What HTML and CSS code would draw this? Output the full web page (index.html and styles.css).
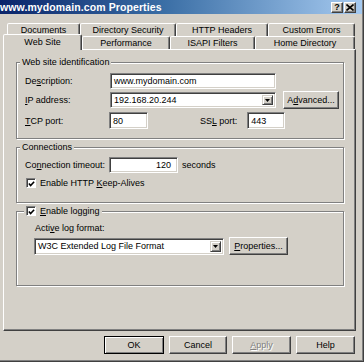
FILE: index.html
```html
<!DOCTYPE html>
<html>
<head>
<meta charset="utf-8">
<link rel="stylesheet" href="styles.css">
</head>
<body>
<div class="window">
  <div class="titlebar">
    <span class="title">www.mydomain.com Properties</span>
    <div class="tbtns">
      <span class="tbtn help">?</span>
      <span class="tbtn close"><svg width="8" height="7" viewBox="0 0 8 7"><path d="M0.5 0.5 L7.5 6.5 M7.5 0.5 L0.5 6.5" stroke="#000" stroke-width="1.6"/></svg></span>
    </div>
  </div>

  <div class="tabs">
    <div class="tabrow back">
      <span class="tab w-docs">Documents</span>
      <span class="tab w-dirsec">Directory Security</span>
      <span class="tab w-http">HTTP Headers</span>
      <span class="tab w-errors">Custom Errors</span>
    </div>
    <div class="tabrow front">
      <span class="tab sel w-web">Web Site</span>
      <span class="tab w-perf">Performance</span>
      <span class="tab w-isapi">ISAPI Filters</span>
      <span class="tab w-home">Home Directory</span>
    </div>
  </div>

  <div class="panel">
    <fieldset class="group">
      <legend>Web site identification</legend>
      <div class="gbody g1">
        <div class="row r1">
          <span class="lbl">De<u>s</u>cription:</span>
          <span class="edit w-desc">www.mydomain.com</span>
        </div>
        <div class="row r2">
          <span class="lbl"><u>I</u>P address:</span>
          <span class="edit combo w-ip">192.168.20.244<span class="dd"><svg width="5" height="3" viewBox="0 0 5 3"><path d="M0 0 H5 L2.5 3 Z" fill="#000"/></svg></span></span>
          <span class="btn w-adv">A<u>d</u>vanced...</span>
        </div>
        <div class="row r3">
          <span class="lbl"><u>T</u>CP port:</span>
          <span class="edit w-tcp">80</span>
          <span class="lbl ssl">SS<u>L</u> port:</span>
          <span class="edit w-ssl">443</span>
        </div>
      </div>
    </fieldset>

    <fieldset class="group">
      <legend>Connections</legend>
      <div class="gbody g2">
        <div class="row r1">
          <span class="lbl">Co<u>n</u>nection timeout:</span>
          <span class="edit num w-timeout">120</span>
          <span class="unit">seconds</span>
        </div>
        <div class="row chkrow">
          <span class="cb"><svg width="8" height="8" viewBox="0 0 8 8"><path d="M1 3.5 L3 5.8 L7 1.5" fill="none" stroke="#000" stroke-width="1.8"/></svg></span>
          <span>Enable HTTP <u>K</u>eep-Alives</span>
        </div>
      </div>
    </fieldset>

    <fieldset class="group">
      <legend class="chklegend">
        <span class="cb"><svg width="8" height="8" viewBox="0 0 8 8"><path d="M1 3.5 L3 5.8 L7 1.5" fill="none" stroke="#000" stroke-width="1.8"/></svg></span>
        <span><u>E</u>nable logging</span>
      </legend>
      <div class="gbody g3">
        <div class="sublbl">Acti<u>v</u>e log format:</div>
        <div class="row r-log">
          <span class="edit combo w-log">W3C Extended Log File Format<span class="dd"><svg width="5" height="3" viewBox="0 0 5 3"><path d="M0 0 H5 L2.5 3 Z" fill="#000"/></svg></span></span>
          <span class="btn w-props"><u>P</u>roperties...</span>
        </div>
      </div>
    </fieldset>
  </div>

  <div class="buttons">
    <span class="btn dlg default">OK</span>
    <span class="btn dlg w-cancel">Cancel</span>
    <span class="btn dlg disabled"><u>A</u>pply</span>
    <span class="btn dlg">Help</span>
  </div>
</div>
</body>
</html>
```

FILE: styles.css
```css
* { box-sizing: border-box; }

html, body {
  margin: 0;
  padding: 0;
  background: #d4d0c8;
}

body {
  font-family: "Liberation Sans", Arial, sans-serif;
  font-size: 9px;
  color: #000;
}

u { text-decoration: underline; text-underline-offset: 1px; }

.window {
  width: 364px;
  height: 362px;
  background: #d4d0c8;
  border-right: 1px solid #404040;
  border-bottom: 1px solid #404040;
  box-shadow: inset -1px -1px #808080;
  overflow: hidden;
}

/* Title bar */
.titlebar {
  height: 14px;
  margin-right: 1px;
  display: flex;
  align-items: center;
  justify-content: space-between;
  padding: 0 6px 0 0;
  background: linear-gradient(to right, #0a246a 0%, #3a6ea5 45%, #a6caf0 100%);
}

.title {
  color: #fff;
  font-weight: bold;
  font-size: 10.5px;
  letter-spacing: 0.1px;
  line-height: 14px;
}

.tbtns {
  display: flex;
  gap: 1px;
}

.tbtn {
  width: 12px;
  height: 11px;
  background: #d4d0c8;
  border: 1px solid;
  border-color: #fff #404040 #404040 #fff;
  box-shadow: inset -1px -1px #808080;
  display: flex;
  align-items: center;
  justify-content: center;
  font-weight: bold;
  font-size: 9px;
  line-height: 9px;
}

/* Tabs */
.tabs {
  margin-top: 9px;
}

.tabrow {
  display: flex;
  height: 13px;
  align-items: flex-end;
}

.tabrow.back { margin-left: 7px; }
.tabrow.front { margin-left: 3px; }

.tab {
  height: 13px;
  border: 1px solid;
  border-bottom: none;
  border-color: #fff #404040 transparent #fff;
  box-shadow: inset -1px 0 #808080;
  border-radius: 2px 2px 0 0;
  display: flex;
  align-items: center;
  justify-content: center;
  line-height: 11px;
  background: #d4d0c8;
}

.tab.sel {
  height: 16px;
  margin-bottom: -1px;
  position: relative;
  z-index: 1;
  align-items: flex-start;
  padding-top: 2px;
}

.w-docs { width: 73px; }
.w-dirsec { width: 96px; }
.w-http { width: 92px; }
.w-errors { width: 87px; }
.w-web { width: 79px; }
.w-perf { width: 88px; }
.w-isapi { width: 85px; }
.w-home { width: 100px; }

/* Panel */
.panel {
  margin-left: 3px;
  width: 353px;
  height: 282px;
  border: 1px solid;
  border-color: #fff #404040 #404040 #fff;
  box-shadow: inset -1px -1px #808080;
  padding: 7px 11px 0 12px;
}

.group {
  margin: 0 0 3px 0;
  padding: 0;
  min-width: 0;
  border: 1px solid #808080;
  box-shadow: inset 1px 1px #fff, 1px 1px #fff;
}

.group legend {
  margin-left: 3px;
  padding: 0 2px;
  line-height: 10px;
  height: 10px;
  background: #d4d0c8;
}

.group legend.chklegend {
  margin-left: 7px;
  padding: 0 2px 0 2px;
  display: flex;
  align-items: center;
  gap: 4px;
}

.gbody { padding-left: 8px; }
.g1 { padding-top: 6px; padding-bottom: 9px; }
.g2 { padding-top: 5px; padding-bottom: 13px; }
.g3 { padding-top: 7px; padding-bottom: 30px; padding-left: 17px; }

.row {
  display: flex;
  align-items: center;
  height: 16px;
}

.g1 .r2 { margin-top: 3px; }
.g1 .r3 { margin-top: 4px; height: 17px; }

.lbl {
  width: 84px;
  flex: none;
}

.lbl.ssl {
  width: auto;
  margin-left: 52px;
  margin-right: 10px;
}

/* Edit boxes */
.edit {
  height: 16px;
  background: #fff;
  border: 1px solid;
  border-color: #808080 #fff #fff #808080;
  box-shadow: inset 1px 1px #404040, inset -1px -1px #d4d0c8;
  padding: 0 3px;
  display: flex;
  align-items: center;
  white-space: nowrap;
  flex: none;
}

.r3 .edit { height: 17px; }

.edit.num { justify-content: flex-end; padding-right: 6px; }

.w-desc { width: 166px; margin-left: 1px; }
.w-ip { width: 166px; margin-left: 1px; }
.w-tcp { width: 39px; }
.w-ssl { width: 38px; }
.w-timeout { width: 69px; }
.w-log { width: 190px; height: 17px; }

.combo {
  position: relative;
  padding-right: 14px;
}

.dd {
  position: absolute;
  right: 2px;
  top: 2px;
  bottom: 2px;
  width: 11px;
  background: #d4d0c8;
  border: 1px solid;
  border-color: #d4d0c8 #404040 #404040 #d4d0c8;
  box-shadow: inset 1px 1px #fff, inset -1px -1px #808080;
  display: flex;
  align-items: center;
  justify-content: center;
}

.unit { margin-left: 4px; }

.chkrow {
  margin-top: 4px;
  height: 12px;
  padding-left: 1px;
  gap: 4px;
}

.cb {
  width: 10px;
  height: 10px;
  flex: none;
  background: #fff;
  border: 1px solid;
  border-color: #808080 #fff #fff #808080;
  box-shadow: inset 1px 1px #404040;
  display: flex;
  align-items: center;
  justify-content: center;
}

.cb svg { margin: 1px 0 0 1px; }

.sublbl {
  line-height: 11px;
  padding-left: 1px;
}

.r-log {
  margin-top: 3px;
  height: 18px;
}

/* Buttons */
.btn {
  height: 18px;
  background: #d4d0c8;
  border: 1px solid;
  border-color: #fff #404040 #404040 #fff;
  box-shadow: inset -1px -1px #808080;
  display: flex;
  align-items: center;
  justify-content: center;
  white-space: nowrap;
  flex: none;
}

.w-adv { width: 56px; margin-left: 7px; }
.w-props { width: 59px; margin-left: 5px; }

.buttons {
  display: flex;
  justify-content: flex-end;
  gap: 5px;
  margin-top: 5px;
  padding-right: 8px;
}

.btn.dlg { width: 59px; }
.btn.dlg.w-cancel { width: 58px; }

.btn.default {
  width: 60px;
  border: 1px solid #000;
  box-shadow: inset 1px 1px #fff, inset -1px -1px #808080;
}

.btn.disabled {
  color: #808080;
  text-shadow: 1px 1px #fff;
}
```
